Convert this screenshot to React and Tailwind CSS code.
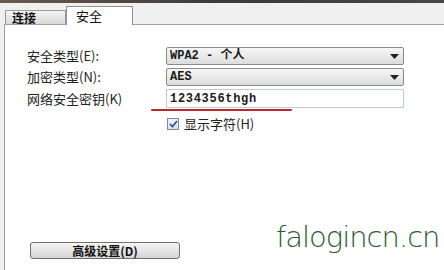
import React from "react";

const cjk = { fontFamily: '"Noto Sans CJK SC", "Liberation Sans", sans-serif' };
const mono = { fontFamily: '"Liberation Mono", "Noto Sans CJK SC", monospace' };

function Arrow() {
  return (
    <svg width="9" height="5" viewBox="0 0 9 5" className="mr-[4px] shrink-0">
      <polygon points="0,0 9,0 4.5,5" fill="#222" />
    </svg>
  );
}

function Select({ children }) {
  return (
    <div className="h-[18px] w-[238px] shrink-0 flex items-center justify-between rounded-[2px] border border-[#8a8a8a] bg-gradient-to-b from-[#f7f7f7] to-[#dcdcdc] pl-[3px]">
      <span className="text-[12px] leading-none text-[#1a1a1a] font-semibold" style={mono}>{children}</span>
      <Arrow />
    </div>
  );
}

function Label({ children }) {
  return <div className="w-[161px] shrink-0 pl-[22px] text-[13px] text-[#222] whitespace-nowrap">{children}</div>;
}

export default function App() {
  return (
    <div className="w-[444px] h-[270px] bg-[#f0f0f0] overflow-hidden relative" style={cjk}>
      <div className="h-[3px] bg-gradient-to-r from-[#6b5a4e] via-[#3c3a3a] to-[#4a4545]" />
      <div className="flex items-end h-[21px] pl-[5px]">
        <div className="h-[14px] w-[61px] shrink-0 border border-b-0 border-[#9a9a9a] bg-gradient-to-b from-[#f4f4f4] to-[#d8d8d8] text-[12px] leading-[13px] pl-[6px] text-[#111] font-semibold">
          连接
        </div>
        <div className="h-[19px] w-[67px] shrink-0 border border-b-0 border-[#8f8f8f] bg-white text-[13px] leading-[17px] pl-[9px] text-[#111] relative -mb-px z-10">
          安全
        </div>
      </div>
      <div className="ml-[4px] h-[247px] border-l border-t border-[#a0a0a0] bg-white pt-[22px] relative">
        <div className="flex flex-col gap-[3px]">
          <div className="flex items-center h-[18px]">
            <Label>安全类型(E):</Label>
            <Select>WPA2 - 个人</Select>
          </div>
          <div className="flex items-center h-[18px]">
            <Label>加密类型(N):</Label>
            <Select>AES</Select>
          </div>
          <div className="flex items-center h-[19px]">
            <Label>网络安全密钥(K)</Label>
            <div className="h-[19px] w-[238px] shrink-0 border border-[#b9cfd6] bg-white flex items-center pl-[3px]">
              <span className="text-[12px] leading-none text-[#1a1a1a] font-semibold tracking-[0.7px]" style={mono}>1234356thgh</span>
            </div>
          </div>
        </div>
        <div className="ml-[146px] w-[141px] h-[2px] bg-[#b8282a] rounded-full mt-[1px]" />
        <div className="flex items-center ml-[162px] mt-[3px] gap-[5px]">
          <div className="w-[12px] h-[12px] shrink-0 border border-[#7a8aa0] bg-gradient-to-b from-[#f0f3f8] to-[#d9e0ea] flex items-center justify-center">
            <svg width="9" height="8" viewBox="0 0 9 8">
              <path d="M1 4 L3.5 6.5 L8 1" stroke="#2c4a80" strokeWidth="1.6" fill="none" />
            </svg>
          </div>
          <span className="text-[13px] text-[#222]">显示字符(H)</span>
        </div>
        <div className="absolute left-[25px] top-[217px] w-[150px] h-[17px] rounded-[3px] border border-[#707070] bg-gradient-to-b from-[#f6f6f6] to-[#d4d4d4] flex items-center justify-center text-[12px] text-[#111] font-semibold">
          高级设置(D)
        </div>
        <div
          className="absolute left-[271px] top-[198px] text-[29px] leading-none text-[#2d5b38] whitespace-nowrap"
          style={{ fontFamily: '"DejaVu Sans", "Liberation Sans", sans-serif', fontWeight: 200, letterSpacing: "-1px" }}
        >
          falogincn.cn
        </div>
      </div>
    </div>
  );
}
